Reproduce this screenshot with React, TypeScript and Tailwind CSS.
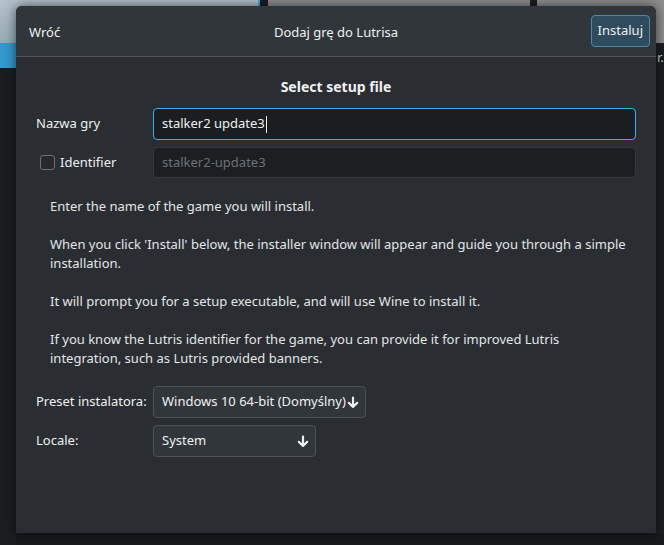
import { Fragment } from "react"

const font = { fontFamily: '"Noto Sans", "Open Sans", sans-serif' }

function ArrowDown() {
  return (
    <svg width="12" height="13" viewBox="0 0 12 13" className="shrink-0">
      <path d="M6 1.5v9.5M1.8 6.8 6 11l4.2-4.2" fill="none" stroke="#eff0f1" strokeWidth="2.2" strokeLinecap="round" strokeLinejoin="round" />
    </svg>
  )
}

function Combo({ value, width }: { value: string; width: string }) {
  return (
    <div className={`${width} h-[32px] flex items-center justify-between pl-[8px] pr-[6px] rounded-[4px] border border-[#4d5257] bg-[#31363b] text-[#eff0f1]`}>
      <span>{value}</span>
      <ArrowDown />
    </div>
  )
}

export default function App() {
  const paragraphs = [
    "Enter the name of the game you will install.",
    "When you click 'Install' below, the installer window will appear and guide you through a simple installation.",
    "It will prompt you for a setup executable, and will use Wine to install it.",
    "If you know the Lutris identifier for the game, you can provide it for improved Lutris integration, such as Lutris provided banners.",
  ]

  return (
    <div className="relative w-[664px] h-[545px] overflow-hidden bg-[#17191b] text-[13px]" style={font}>
      {/* desktop behind the dialog */}
      <div className="absolute left-0 top-0 w-[262px] h-[43px] bg-gradient-to-b from-[#b4c2cb] to-[#97a9b4]" />
      <div className="absolute left-[258px] top-0 w-[2px] h-[43px] bg-[#3daee9]" />
      <div className="absolute left-[260px] top-0 w-[8px] h-[43px] bg-[#1b1e20]" />
      <div className="absolute left-[268px] top-0 w-[262px] h-[43px] bg-[#8e8e8e]" />
      <div className="absolute left-[530px] top-0 w-[7px] h-[43px] bg-[#1b1e20]" />
      <div className="absolute left-[537px] top-0 w-[127px] h-[43px] bg-[#8e8e8e]" />
      <div className="absolute left-0 top-[43px] w-[16px] h-[25px] bg-[#3598cf]" />
      <div className="absolute left-0 top-[68px] w-[16px] h-[477px] bg-[#1b1e20]" />
      <div className="absolute left-[656px] top-[43px] w-[8px] h-[490px] bg-[#1c1e21]" />
      <div className="absolute left-[657px] top-[48px] text-[#c8cacc] text-[13px]">r.</div>

      {/* dialog */}
      <div className="absolute left-[16px] top-[6px] w-[640px] h-[527px] flex flex-col rounded-t-[6px] overflow-hidden bg-[#2a2e32] shadow-[0_0_12px_rgba(0,0,0,0.6)]">
        <div className="h-[51px] shrink-0 flex items-center justify-between pl-[13px] pr-[6px] bg-[#31363b] border-b border-[#505559] text-[#eff0f1]">
          <span className="w-[63px] mt-[3px]">Wróć</span>
          <span className="mt-[3px]">Dodaj grę do Lutrisa</span>
          <div className="w-[70px] flex justify-end">
            <button className="h-[32px] px-[6px] rounded-[4px] border border-[#4f87a8] bg-[#2f4b5e] text-[#eff0f1]">Instaluj</button>
          </div>
        </div>

        <div className="flex flex-col pt-[20px] px-[20px]">
          <div className="text-center font-bold text-[14px] text-[#eff0f1] leading-[20px]">Select setup file</div>

          <div className="grid grid-cols-[117px_1fr] gap-y-[7px] mt-[11px] items-center text-[#eff0f1]">
            <span>Nazwa gry</span>
            <div className="h-[32px] flex items-center px-[8px] rounded-[4px] border border-[#3daee9] bg-[#1b1e20]">
              <span>stalker2 update3</span>
              <span className="w-px h-[17px] bg-[#eff0f1] ml-px" />
            </div>
            <label className="flex items-center gap-[5px] pl-[4px]">
              <span className="w-[15px] h-[15px] rounded-[3px] border border-[#6a6f74] bg-[#26292d]" />
              <span>Identifier</span>
            </label>
            <div className="h-[31px] flex items-center px-[8px] rounded-[4px] border border-[#34383c] bg-[#1c1f22] text-[#6c7175]">
              stalker2-update3
            </div>
          </div>

          <div className="flex flex-col gap-[19px] mt-[19px] pl-[14px] pr-[4px] leading-[19px] text-[#e3e5e7]">
            {paragraphs.map((p, i) => (
              <p key={i}>{p}</p>
            ))}
          </div>

          <div className="grid grid-cols-[117px_1fr] gap-y-[7px] mt-[18px] items-center text-[#eff0f1]">
            {[
              ["Preset instalatora:", "Windows 10 64-bit (Domyślny)", "w-[213px]"],
              ["Locale:", "System", "w-[163px]"],
            ].map(([label, value, width]) => (
              <Fragment key={label}>
                <span>{label}</span>
                <Combo value={value} width={width} />
              </Fragment>
            ))}
          </div>
        </div>
      </div>
    </div>
  )
}
